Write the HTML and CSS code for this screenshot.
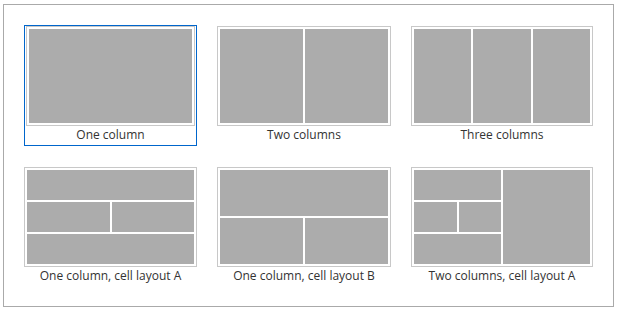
FILE: index.html
```html
<!DOCTYPE html>
<html lang="en">
<head>
    <meta charset="UTF-8">
    <title>Layout picker</title>
    <link rel="stylesheet" href="styles.css">
</head>
<body>
    <div class="picker">
        <div class="layout selected">
            <div class="thumb">
                <div class="cells">
                    <div class="cell"></div>
                </div>
            </div>
            <div class="label">One column</div>
        </div>

        <div class="layout">
            <div class="thumb">
                <div class="cells two">
                    <div class="cell"></div>
                    <div class="cell"></div>
                </div>
            </div>
            <div class="label">Two columns</div>
        </div>

        <div class="layout">
            <div class="thumb">
                <div class="cells three">
                    <div class="cell"></div>
                    <div class="cell"></div>
                    <div class="cell"></div>
                </div>
            </div>
            <div class="label">Three columns</div>
        </div>

        <div class="layout">
            <div class="thumb">
                <div class="cells cell-a">
                    <div class="cell wide"></div>
                    <div class="cell"></div>
                    <div class="cell"></div>
                    <div class="cell wide"></div>
                </div>
            </div>
            <div class="label">One column, cell layout A</div>
        </div>

        <div class="layout">
            <div class="thumb">
                <div class="cells cell-b">
                    <div class="cell wide"></div>
                    <div class="cell"></div>
                    <div class="cell"></div>
                </div>
            </div>
            <div class="label">One column, cell layout B</div>
        </div>

        <div class="layout">
            <div class="thumb">
                <div class="cells two">
                    <div class="cells cell-a">
                        <div class="cell wide"></div>
                        <div class="cell"></div>
                        <div class="cell"></div>
                        <div class="cell wide"></div>
                    </div>
                    <div class="cell"></div>
                </div>
            </div>
            <div class="label">Two columns, cell layout A</div>
        </div>
    </div>
</body>
</html>
```

FILE: styles.css
```css
* {
    box-sizing: border-box;
}

body {
    margin: 4px 3px;
    font-family: 'Open Sans', sans-serif;
    color: #333;
}

.picker {
    display: grid;
    grid-template-columns: 173px 174px 182px;
    gap: 20px;
    padding: 20px 20px 19px;
    border: 1px solid #aaa;
}

.layout {
    border-top: 1px solid transparent;
    border-bottom: 1px solid transparent;
    cursor: pointer;
}

.layout.selected {
    border: 1px solid #0066cc;
    padding: 0 1px;
}

.thumb {
    height: 100px;
    padding: 2px;
    border: 1px solid #c8c8c8;
    background: white;
}

.cells {
    display: grid;
    gap: 2px;
    height: 100%;
}

.cell {
    background-color: #acacac;
}

.two {
    grid-template-columns: 1fr 1fr;
}

.three {
    grid-template-columns: 1fr 1fr 1fr;
}

.cell-a {
    grid-template-columns: 1fr 1fr;
    grid-template-rows: 1fr 1fr 1fr;
}

.cell-b {
    grid-template-columns: 1fr 1fr;
    grid-template-rows: 1fr 1fr;
}

.wide {
    grid-column: span 2;
}

.label {
    font-size: 12px;
    line-height: 17px;
    padding-bottom: 2px;
    text-align: center;
}
```
